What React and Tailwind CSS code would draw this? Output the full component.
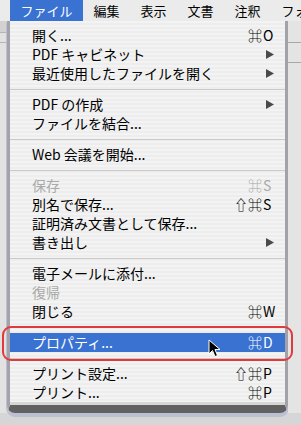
import React from 'react';

// Aqua-style "ファイル" menu, opened, with the プロパティ row highlighted

const menuBar = ['ファイル', '編集', '表示', '文書', '注釈', 'フォ'];

const items = [
  { label: '開く...', key: 'O' },
  { label: 'PDF キャビネット', sub: true },
  { label: '最近使用したファイルを開く', sub: true },
  'sep',
  { label: 'PDF の作成', sub: true },
  { label: 'ファイルを結合...' },
  'sep',
  { label: 'Web 会議を開始...' },
  'sep',
  { label: '保存', key: 'S', disabled: true },
  { label: '別名で保存...', mod: '⇧', key: 'S' },
  { label: '証明済み文書として保存...' },
  { label: '書き出し', sub: true },
  'sep',
  { label: '電子メールに添付...' },
  { label: '復帰', disabled: true },
  { label: '閉じる', key: 'W' },
  'sep',
  { label: 'プロパティ...', key: 'D', active: true },
  'sep',
  { label: 'プリント設定...', mod: '⇧', key: 'P' },
  { label: 'プリント...', key: 'P' },
];

const Arrow = () => (
  <svg width="8" height="9" viewBox="0 0 8 9" className="mr-[2px]">
    <polygon points="0,0 8,4.5 0,9" fill="#4a4a4a" />
  </svg>
);

const Cursor = () => (
  <svg width="14" height="20" viewBox="0 0 14 20" className="absolute left-[208px] top-[339px]">
    <path d="M1 1 L1 15 L4.5 11.5 L7 17.5 L9.5 16.5 L7 10.5 L12 10.5 Z" fill="#000" stroke="#fff" strokeWidth="1" strokeLinejoin="round" />
  </svg>
);

const MenuRow = ({ item }) => {
  const color = item.active ? 'text-white' : item.disabled ? 'text-[#a9a9a9]' : 'text-black';
  return (
    <div className={`flex items-center h-[19px] pl-[22px] pr-[9px] ${item.active ? 'bg-[#3a72d2]' : ''} ${color}`}>
      <span className="flex-1 whitespace-nowrap">{item.label}</span>
      {item.key && (
        <span className="flex items-center font-['Noto_Sans_CJK_JP','DejaVu_Sans',sans-serif]">
          <span>{item.mod}⌘</span>
          <span className="w-[14px] pl-[1px]">{item.key}</span>
        </span>
      )}
      {item.sub && <Arrow />}
    </div>
  );
};

export default function App() {
  return (
    <div className="relative w-[301px] h-[425px] overflow-hidden bg-[#d6d6d6] font-['Noto_Sans_CJK_JP',sans-serif]">
      {/* menu bar */}
      <div className="flex h-[21px] pl-[10px] bg-[#ebebeb] text-[13px] leading-[21px] text-black">
        {menuBar.map((m, i) => (
          <span key={m} className={`px-[10.5px] whitespace-nowrap ${i === 0 ? 'bg-[#3a72d2] text-white' : ''}`}>{m}</span>
        ))}
      </div>

      <div className="flex">
        {/* window behind, left side */}
        <div className="w-[7px] h-[392px] bg-[#e2e2e2] flex flex-col">
          <div className="h-[12px] bg-[#d2d2d2] border-b border-[#b4b4b4]" />
          <div className="h-[10px] border-b border-[#b4b4b4]" />
        </div>

        {/* menu panel */}
        <div className="w-[281px] border-x-[3px] border-b-[8px] border-x-[#a2a2a8] border-b-[#616161] rounded-b-[8px] shadow-[0_3px_0_1px_#bcc0d2] overflow-hidden">
          <div className="pt-[5px] text-[14px] bg-[repeating-linear-gradient(to_bottom,#f3f3f3_0px,#f3f3f3_2px,#ededed_2px,#ededed_4px)]">
            {items.map((item, i) =>
              item === 'sep' ? (
                <div key={i} className="h-[12px] flex items-center">
                  <div className="w-full h-px bg-[#c9c9c9]" />
                </div>
              ) : (
                <MenuRow key={i} item={item} />
              )
            )}
          </div>
        </div>

        {/* window behind, right side */}
        <div className="flex-1 h-[392px] bg-[#e4e4e4] flex flex-col">
          <div className="h-[22px] border-b border-[#a8a8a8]" />
          <div className="h-[20px] border-b border-[#a8a8a8]" />
        </div>
      </div>

      {/* annotation box */}
      <div className="absolute left-[2px] top-[326px] w-[291px] h-[35px] border-2 border-[#e23a3a] rounded-[9px]" />
      <Cursor />
    </div>
  );
}
